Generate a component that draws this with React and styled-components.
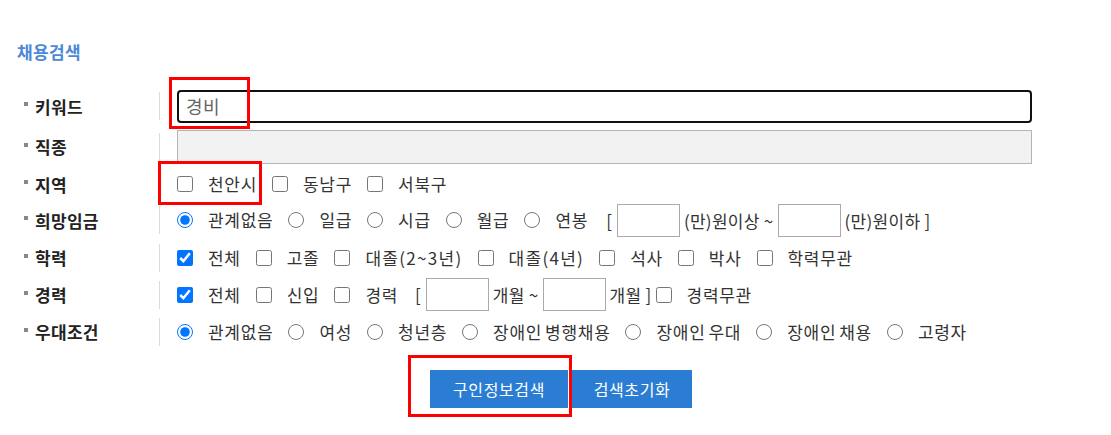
import React from 'react'
import styled, { createGlobalStyle } from 'styled-components'

const GlobalStyle = createGlobalStyle`
  html, body {
    margin: 0;
    padding: 0;
    background: #fff;
  }
  body {
    font-family: "Noto Sans CJK KR", "Noto Sans", sans-serif;
    color: #333;
  }
`

const rows = [
  { label: '키워드', h: 40, kind: 'keyword' },
  { label: '직종', h: 41, kind: 'job' },
  { label: '지역', h: 34, kind: 'area' },
  { label: '희망임금', h: 38, kind: 'pay' },
  { label: '학력', h: 37, kind: 'edu' },
  { label: '경력', h: 37, kind: 'career' },
  { label: '우대조건', h: 37, kind: 'pref' },
]

function Option({ type = 'checkbox', checked, children, name, spread }) {
  return (
    <OptionLabel $spread={spread}>
      <Check type={type} name={name} defaultChecked={checked} />
      <span>{children}</span>
    </OptionLabel>
  )
}

function RowContent({ kind }) {
  if (kind === 'keyword') {
    return <Keyword type="text" defaultValue="경비" />
  }
  if (kind === 'job') {
    return <JobBox />
  }
  if (kind === 'area') {
    return (
      <>
        <Option>천안시</Option>
        <Option>동남구</Option>
        <Option>서북구</Option>
      </>
    )
  }
  if (kind === 'pay') {
    return (
      <>
        <Option type="radio" name="pay" checked>관계없음</Option>
        <Option type="radio" name="pay">일급</Option>
        <Option type="radio" name="pay">시급</Option>
        <Option type="radio" name="pay">월급</Option>
        <Option type="radio" name="pay">연봉</Option>
        <Bracket $left={3}>[</Bracket>
        <SmallInput type="text" />
        <Unit>(만)원이상 ~</Unit>
        <SmallInput type="text" />
        <Unit>(만)원이하 ]</Unit>
      </>
    )
  }
  if (kind === 'edu') {
    return (
      <>
        <Option checked>전체</Option>
        <Option>고졸</Option>
        <Option spread>대졸(2~3년)</Option>
        <Option spread>대졸(4년)</Option>
        <Option>석사</Option>
        <Option>박사</Option>
        <Option>학력무관</Option>
      </>
    )
  }
  if (kind === 'career') {
    return (
      <>
        <Option checked>전체</Option>
        <Option>신입</Option>
        <Option>경력</Option>
        <Bracket $left={2}>[</Bracket>
        <SmallInput type="text" />
        <Unit>개월 ~</Unit>
        <SmallInput type="text" />
        <Unit>개월 ]</Unit>
        <Option>경력무관</Option>
      </>
    )
  }
  return (
    <>
      <Option type="radio" name="pref" checked>관계없음</Option>
      <Option type="radio" name="pref">여성</Option>
      <Option type="radio" name="pref">청년층</Option>
      <Option type="radio" name="pref">장애인 병행채용</Option>
      <Option type="radio" name="pref">장애인 우대</Option>
      <Option type="radio" name="pref">장애인 채용</Option>
      <Option type="radio" name="pref">고령자</Option>
    </>
  )
}

export default function App() {
  return (
    <Page>
      <GlobalStyle />
      <Title>채용검색</Title>
      <Form>
        {rows.map(r => (
          <Row key={r.label} $h={r.h}>
            <Label>
              <Bullet />
              {r.label}
            </Label>
            <Divider />
            <Content>
              <RowContent kind={r.kind} />
            </Content>
          </Row>
        ))}
      </Form>
      <ButtonBar>
        <Button $w={138}>구인정보검색</Button>
        <Button $w={120}>검색초기화</Button>
      </ButtonBar>

      <Highlight $x={169} $y={77} $w={81} $h={52} />
      <Highlight $x={158} $y={161} $w={104} $h={44} />
      <Highlight $x={408} $y={355} $w={164} $h={62} />
    </Page>
  )
}

const Page = styled.div`
  position: relative;
  width: 1111px;
  height: 435px;
  padding: 40px 0 0 17px;
  box-sizing: border-box;
  overflow: hidden;
`

const Title = styled.h2`
  margin: 0;
  font-size: 17px;
  line-height: 24px;
  font-weight: 700;
  color: #4c87d9;
  letter-spacing: 0.4px;
`

const Form = styled.div`
  width: 1015px;
  margin-top: 22px;
`

const Row = styled.div`
  display: flex;
  align-items: center;
  height: ${props => props.$h}px;
`

const Label = styled.div`
  display: flex;
  align-items: center;
  gap: 7px;
  width: 142px;
  padding-left: 7px;
  box-sizing: border-box;
  font-size: 17px;
  font-weight: 700;
  color: #222;
  letter-spacing: 0.3px;
`

const Bullet = styled.span`
  width: 4px;
  height: 4px;
  background: #888;
  transform: translateY(-2px);
`

const Divider = styled.span`
  width: 1px;
  height: 28px;
  background: #dcdcdc;
`

const Content = styled.div`
  flex: 1;
  display: flex;
  align-items: center;
  padding-left: 17px;
  font-size: 17px;
  color: #333;
  white-space: nowrap;
`

const Keyword = styled.input`
  width: 100%;
  height: 33px;
  box-sizing: border-box;
  border: 2px solid #111;
  border-radius: 4px;
  padding: 0 7px;
  font-family: inherit;
  font-size: 18px;
  color: #666;
  letter-spacing: 0.5px;
  outline: none;
`

const JobBox = styled.div`
  width: 100%;
  height: 34px;
  box-sizing: border-box;
  background: #f2f2f2;
  border: 1px solid #b4b4b4;
`

const OptionLabel = styled.label`
  display: inline-flex;
  align-items: center;
  gap: 15px;
  margin-right: 15px;
  line-height: 22px;
  letter-spacing: ${props => (props.$spread ? '1.3px' : '0.7px')};
  word-spacing: -1.5px;
`

const Check = styled.input`
  width: 16px;
  height: 16px;
  margin: 0;
  accent-color: #0075ff;
`

const Bracket = styled.span`
  margin-left: ${props => props.$left}px;
  margin-right: 5px;
`

const SmallInput = styled.input`
  width: 63px;
  height: 33px;
  box-sizing: border-box;
  border: 1px solid #aaa;
  border-radius: 0;
  padding: 0 4px;
  font-family: inherit;
  font-size: 15px;
`

const Unit = styled.span`
  margin: 0 4px;
  letter-spacing: 0.3px;
`

const ButtonBar = styled.div`
  display: flex;
  gap: 4px;
  padding-left: 413px;
  margin-top: 20px;
`

const Button = styled.button`
  width: ${props => props.$w}px;
  height: 38px;
  border: none;
  background: #2a7dd2;
  color: #fff;
  font-family: inherit;
  font-size: 16px;
  letter-spacing: 0.6px;
  cursor: pointer;
`

const Highlight = styled.div`
  position: absolute;
  left: ${props => props.$x}px;
  top: ${props => props.$y}px;
  width: ${props => props.$w}px;
  height: ${props => props.$h}px;
  border: 3px solid #f00;
  box-sizing: border-box;
  pointer-events: none;
`
